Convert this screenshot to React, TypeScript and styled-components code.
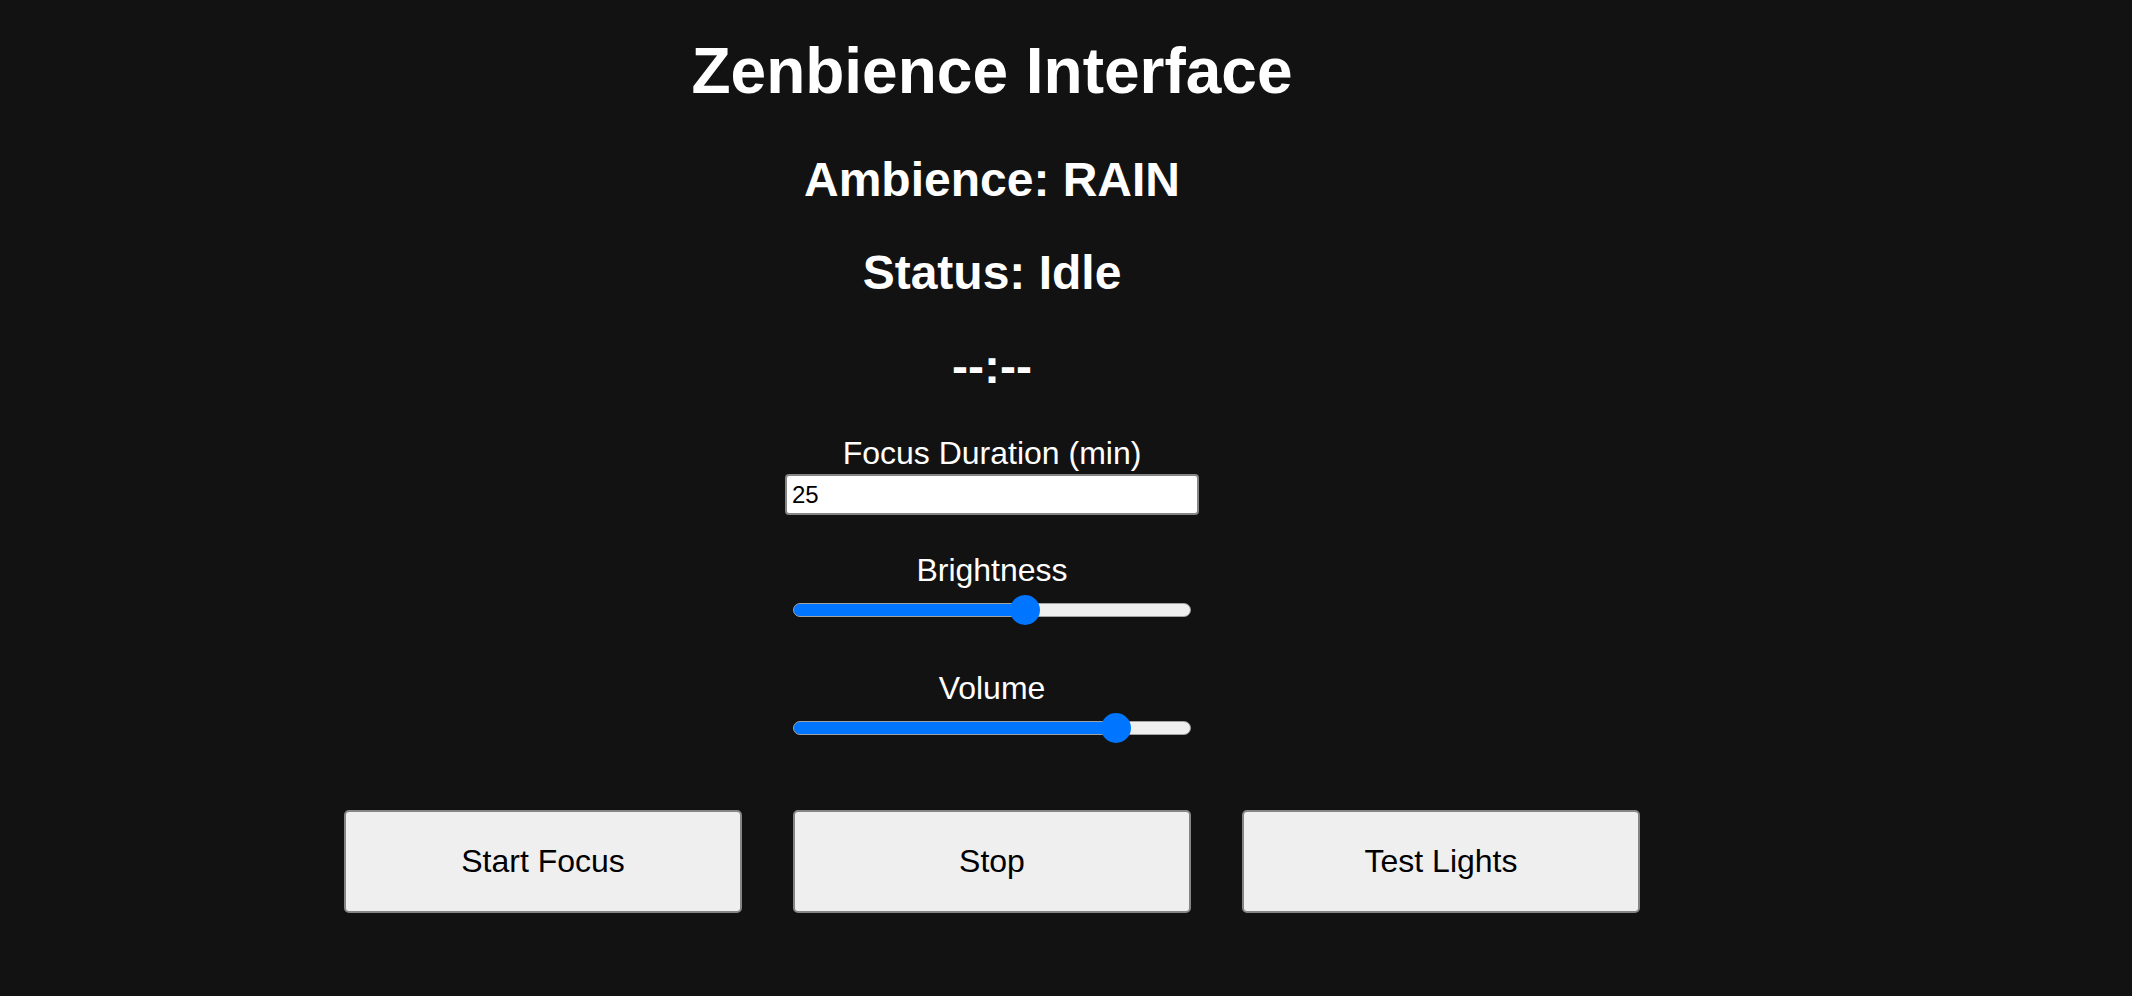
import React, { useState } from "react";
import styled, { createGlobalStyle } from "styled-components";

const GlobalStyle = createGlobalStyle`
  html, body {
    margin: 0;
    padding: 0;
    background: #121212;
  }
  body {
    font-family: "Liberation Sans", Arial, Helvetica, sans-serif;
    color: #ffffff;
  }
`;

const Page = styled.main`
  width: 1952px;
  margin-left: 16px;
  padding-top: 34px;
  display: flex;
  flex-direction: column;
  align-items: center;
  text-align: center;
`;

const Title = styled.h1`
  margin: 0;
  font-size: 64px;
  line-height: 74px;
  font-weight: 700;
`;

const Heading = styled.h2<{ $top: number }>`
  margin: ${(p) => p.$top}px 0 0;
  font-size: 48px;
  line-height: 56px;
  font-weight: 700;
`;

const Field = styled.div<{ $top: number }>`
  margin-top: ${(p) => p.$top}px;
  display: flex;
  flex-direction: column;
  align-items: center;
`;

const Label = styled.label`
  font-size: 32px;
  line-height: 37px;
`;

const TextInput = styled.input`
  box-sizing: border-box;
  margin-top: 2px;
  width: 414px;
  height: 41px;
  padding: 0 5px;
  border: 2px solid #858585;
  border-radius: 4px;
  background: #ffffff;
  color: #000000;
  font-family: "Liberation Sans", Arial, sans-serif;
  font-size: 24px;
  outline: none;
`;

const Range = styled.input`
  -webkit-appearance: none;
  appearance: none;
  margin: 14px 0 0;
  width: 398px;
  height: 14px;
  background: transparent;
  padding: 0;

  &::-webkit-slider-runnable-track {
    box-sizing: border-box;
    height: 14px;
    border-radius: 7px;
    border: 1px solid #a3a3a3;
    background: linear-gradient(
      to right,
      #0075ff 0,
      #0075ff var(--fill),
      #efefef var(--fill),
      #efefef 100%
    );
  }

  &::-webkit-slider-thumb {
    -webkit-appearance: none;
    appearance: none;
    width: 30px;
    height: 30px;
    margin-top: -9px;
    border: none;
    border-radius: 50%;
    background: #0075ff;
  }
`;

const ButtonRow = styled.div`
  margin-top: 75px;
  display: flex;
  gap: 51px;
  justify-content: center;
`;

const ActionButton = styled.button`
  box-sizing: border-box;
  width: 398px;
  height: 103px;
  border: 2px solid #858585;
  border-radius: 5px;
  background: #efefef;
  color: #000000;
  font-family: "Liberation Sans", Arial, sans-serif;
  font-size: 32px;
  cursor: pointer;
`;

const TRACK = 398;
const THUMB = 30;

function Slider({ value, onChange }: { value: number; onChange: (v: number) => void }) {
  const fillPx = THUMB / 2 + (value / 100) * (TRACK - THUMB);
  const fill = `${((fillPx / TRACK) * 100).toFixed(2)}%`;
  return (
    <Range
      type="range"
      min={0}
      max={100}
      value={value}
      onChange={(e) => onChange(Number(e.target.value))}
      style={{ ["--fill" as any]: fill }}
    />
  );
}

export default function App() {
  const [duration, setDuration] = useState("25");
  const [brightness, setBrightness] = useState(59);
  const [volume, setVolume] = useState(84);

  return (
    <>
      <GlobalStyle />
      <Page>
        <Title>Zenbience Interface</Title>
        <Heading $top={44}>Ambience: RAIN</Heading>
        <Heading $top={37}>Status: Idle</Heading>
        <Heading $top={38}>--:--</Heading>

        <Field $top={40}>
          <Label>Focus Duration (min)</Label>
          <TextInput
            type="number"
            value={duration}
            onChange={(e) => setDuration(e.target.value)}
          />
        </Field>

        <Field $top={37}>
          <Label>Brightness</Label>
          <Slider value={brightness} onChange={setBrightness} />
        </Field>

        <Field $top={53}>
          <Label>Volume</Label>
          <Slider value={volume} onChange={setVolume} />
        </Field>

        <ButtonRow>
          <ActionButton>Start Focus</ActionButton>
          <ActionButton>Stop</ActionButton>
          <ActionButton>Test Lights</ActionButton>
        </ButtonRow>
      </Page>
    </>
  );
}
